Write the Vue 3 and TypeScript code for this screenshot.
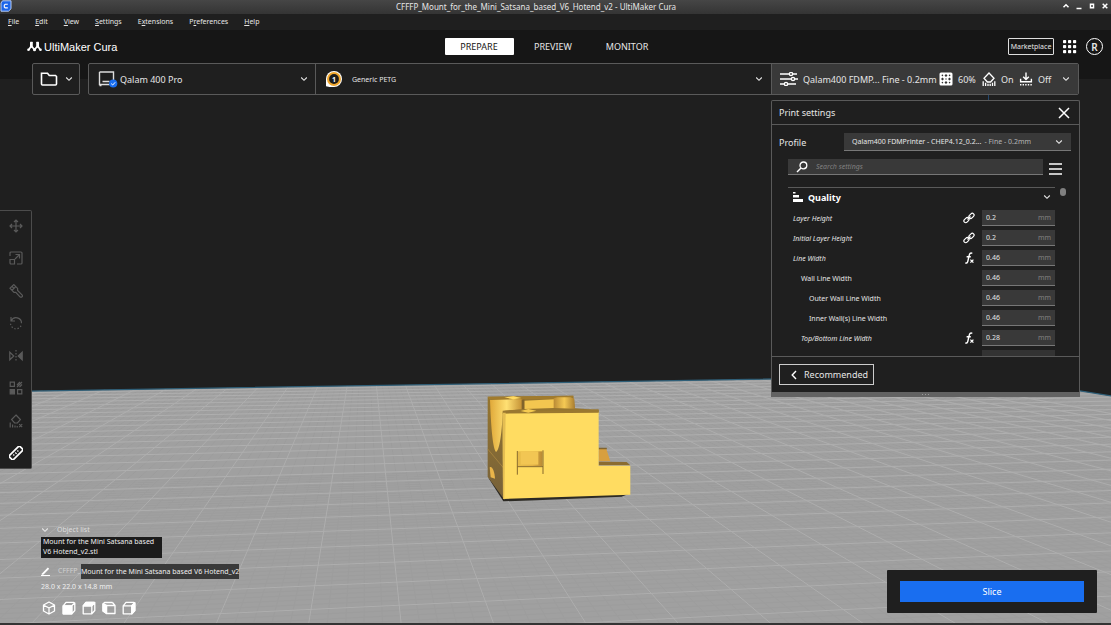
<script setup lang="ts">
import { ref } from 'vue'

interface Line { x1: number; y1: number; x2: number; y2: number }
interface Setting { name: string; value: string; depth: number; italic: boolean; icon: '' | 'link' | 'fx' }

const menus = ['File', 'Edit', 'View', 'Settings', 'Extensions', 'Preferences', 'Help']
const stages = ['PREPARE', 'PREVIEW', 'MONITOR']
const stage = ref('PREPARE')
const search = ref('')

const settings = ref<Setting[]>([
  { name: 'Layer Height', value: '0.2', depth: 0, italic: true, icon: 'link' },
  { name: 'Initial Layer Height', value: '0.2', depth: 0, italic: true, icon: 'link' },
  { name: 'Line Width', value: '0.46', depth: 0, italic: true, icon: 'fx' },
  { name: 'Wall Line Width', value: '0.46', depth: 1, italic: false, icon: '' },
  { name: 'Outer Wall Line Width', value: '0.46', depth: 2, italic: false, icon: '' },
  { name: 'Inner Wall(s) Line Width', value: '0.46', depth: 2, italic: false, icon: '' },
  { name: 'Top/Bottom Line Width', value: '0.28', depth: 1, italic: true, icon: 'fx' },
])

const tools = ['Move', 'Scale', 'Paint', 'Rotate', 'Mirror', 'Per model settings', 'Support blocker', 'Measure']
const views = ['3D view', 'Front view', 'Top view', 'Left view', 'Right view']

// Build plate in perspective: both line families share one horizon.
const horizon = 276
const vanishX = 365
const sideX = 7400

function receding(k: number): Line {
  const slope = 0.104 + 0.266 * (k - 2)
  const near = 360
  const depth = 105 * (sideX - vanishX) / (sideX - 640 + 105 * slope)
  return { x1: vanishX + slope * depth, y1: horizon + depth, x2: vanishX + slope * near, y2: horizon + near }
}

function crossing(j: number): Line {
  const d = 1 / (0.003861 + 0.0002385 * j)
  const at = (x: number) => horizon + d * (sideX - x) / (sideX - 640)
  return { x1: -10, y1: at(-10), x2: 1130, y2: at(1130) }
}

const major: Line[] = []
const minor: Line[] = []
for (let k = -14; k <= 22; k++) major.push(receding(k))
for (let j = -5; j <= 23; j++) major.push(crossing(j))
for (let k = -140; k < 230; k += 2) minor.push(receding(k / 10))
for (let j = -50; j < 60; j += 2) minor.push(crossing(j / 10))
</script>

<template>
  <div class="app">
    <svg class="scene" viewBox="0 0 1111 625" preserveAspectRatio="xMidYMin slice" aria-hidden="true">
      <defs>
        <clipPath id="plate"><path d="M-10 391.7 985 375.6 1130 399V640H-10z" /></clipPath>
        <linearGradient id="bore" x1="0" x2="1"><stop offset="0" stop-color="#e0a93a" /><stop offset=".5" stop-color="#ffe073" /><stop offset="1" stop-color="#c08b30" /></linearGradient>
        <linearGradient id="shade" x1="0" x2="1"><stop offset="0" stop-color="#e8bd4a" /><stop offset=".6" stop-color="#e2b246" /><stop offset="1" stop-color="#b98a35" /></linearGradient>
        <linearGradient id="post" x1="0" x2="1"><stop offset="0" stop-color="#b98a35" /><stop offset=".5" stop-color="#f5c954" /><stop offset="1" stop-color="#a87c30" /></linearGradient>
        <linearGradient id="side" x1="0" y1="0" x2="0" y2="1"><stop offset="0" stop-color="#96762f" /><stop offset="1" stop-color="#75603a" /></linearGradient>
      </defs>
      <g clip-path="url(#plate)">
        <rect x="-10" y="370" width="1140" height="270" fill="#a0a0a0" />
        <g stroke="#8d8d8d" stroke-width="1" opacity=".15">
          <line v-for="(l, i) in minor" :key="i" v-bind="l" />
        </g>
        <g stroke="#b3b3b3" stroke-width="1" opacity=".8">
          <line v-for="(l, i) in major" :key="i" v-bind="l" />
        </g>
      </g>
      <path d="M-10 391.7 985 375.6 1130 399" fill="none" stroke="#2f5f78" stroke-width="1.2" />
      <path d="M988.5 94v8" stroke="#23466b" />
      <g transform="translate(470 380) scale(.3333)">
        <path d="M53 290 100 364 200 361 455 350 481 340 90 330z" fill="#2c2a24" />
        <path d="M53 50 104 95V360L53 290z" fill="url(#side)" />
        <path d="M53 50 310 47 314 85 386 90V98L104 100z" fill="#96752f" />
        <path d="M60 60 160 56V88L104 92 98 98C96 150 90 210 78 216 66 200 62 110 60 60z" fill="url(#bore)" />
        <path d="M103 52 130 49 155 54 130 59z" fill="#ffda62" />
        <path d="M163 62 252 58V84L163 87z" fill="#f3c650" />
        <path d="M155 58H163V88H155z" fill="#80632b" />
        <path d="M53 50 310 47V52L255 57 60 58z" fill="#a17b2d" />
        <path d="M103 52 130 49 155 54 130 58z" fill="#ffda62" />
        <path d="M251 55 262 52H302L313 56 315 86 251 84z" fill="url(#post)" />
        <path d="M59 262C66 256 74 274 75 296L62 292z" fill="#e9b54a" />
        <path d="M53 207 104 268" stroke="#b28d43" stroke-width="2" />
        <path d="M386 203 409 207 421 244H386z" fill="#d79f40" />
        <path d="M386 203 410 203 411 208H386z" fill="#80642f" />
        <path d="M386 245 470 246 481 256H386z" fill="#8b6c30" />
        <path d="M98 98 386 96V257H481V344L99 357z" fill="#ffdc61" />
        <path d="M98 92 165 88 200 94 386 88V98L98 101z" fill="#9a7830" />
        <path d="M152 93 175 87 199 92 175 98z" fill="#f6cb50" />
        <path d="M98 98H107L103 357H99z" fill="#e4bd52" />
        <path d="M144 214H217V258H144z" fill="url(#shade)" />
        <path d="M152 214H205V254H152z" fill="#f2c653" />
        <path d="M142 213V284M219 211V282M142 260H219" fill="none" stroke="#87682c" stroke-width="3" />
      </g>
    </svg>

    <header class="titlebar">
      <svg class="appicon" viewBox="0 0 12 12"><path d="M2.5.8H11v8L8.5 11.2H1V3z" fill="#1d65e8" stroke="#b7cdf5" stroke-width="1" /><path d="M7.8 4.3H5.2L4.3 5.2V7l.9.9h2.6" fill="none" stroke="#fff" stroke-width="1.1" /></svg>
      <span class="title">CFFFP_Mount_for_the_Mini_Satsana_based_V6_Hotend_v2 - UltiMaker Cura</span>
      <div class="winbuttons">
        <button aria-label="Keep above"><svg viewBox="0 0 8 8"><path d="m1.5 5.3 2.5-2.5 2.5 2.5" /></svg></button>
        <button aria-label="Minimize"><svg viewBox="0 0 8 8"><path d="M1.5 6.5h5" /></svg></button>
        <button aria-label="Maximize"><svg viewBox="0 0 8 8"><path d="M2.5 2.3h3v3.4h-3z" /></svg></button>
        <button aria-label="Close"><svg viewBox="0 0 8 8"><path d="m1.7 1.7 4.6 4.6m0-4.6L1.7 6.3" /></svg></button>
      </div>
    </header>

    <nav class="menubar">
      <button v-for="m in menus" :key="m"><template v-if="m === 'Extensions'">E<u>x</u>tensions</template><template v-else-if="m === 'Preferences'">P<u>r</u>eferences</template><template v-else><u>{{ m[0] }}</u>{{ m.slice(1) }}</template></button>
    </nav>

    <div class="mainheader">
      <div class="brand">
        <svg viewBox="0 0 15 11"><g fill="#fff"><circle cx="1.5" cy="8.8" r="1.3" /><circle cx="13.5" cy="8.8" r="1.3" /><rect x="3" y=".8" width="2.8" height="6" rx=".5" /><rect x="9.2" y=".8" width="2.8" height="6" rx=".5" /><circle cx="7.5" cy="8.8" r="1.5" /></g><path d="M3.9 5.5 1.8 8.8M5 5.5l2.3 3.3h.4L10 5.5m1.1 0 2.1 3.3" fill="none" stroke="#fff" stroke-width="1.6" /></svg>
        <span>UltiMaker Cura</span>
      </div>
      <div class="stages">
        <button v-for="s in stages" :key="s" :class="{ active: s === stage }" @click="stage = s">{{ s }}</button>
      </div>
      <div class="account">
        <button class="market">Marketplace</button>
        <button class="apps" aria-label="Applications"><svg viewBox="0 0 14 14" fill="#fff"><template v-for="r in 3" :key="r"><rect v-for="c in 3" :key="c" :x="c * 5 - 5" :y="r * 5 - 5" width="3.2" height="3.2" rx=".8" /></template></svg></button>
        <button class="avatar" aria-label="Account">R</button>
      </div>
    </div>

    <div class="configbar">
      <button class="box open" aria-label="Open file">
        <svg class="folder" viewBox="0 0 18 16"><path d="M1.5 13V2.2h6l1.8 2.3h6.2l1 1V13a1 1 0 0 1-1 1h-13a1 1 0 0 1-1-1z" fill="none" stroke="#fff" stroke-width="1.6" /></svg>
        <svg class="chev" viewBox="0 0 8 6"><path d="m1.2 1.5 2.8 2.8 2.8-2.8" /></svg>
      </button>
      <div class="box combo">
        <button class="printer">
          <svg class="printicon" viewBox="0 0 20 18"><path d="M1.5 2h14v10M1.5 2v12.5h10M1.5 15.5h2M4.5 11.5h7" fill="none" stroke="#ddd" stroke-width="1.4" /><circle cx="15.2" cy="13.5" r="4.1" fill="#196ef0" /><path d="m13.2 13.6 1.5 1.4 2.5-2.7" fill="none" stroke="#fff" stroke-width="1" /></svg>
          <span>Qalam 400 Pro</span>
          <svg class="chev" viewBox="0 0 8 6"><path d="m1.2 1.5 2.8 2.8 2.8-2.8" /></svg>
        </button>
        <button class="material">
          <svg class="spool" viewBox="0 0 18 18"><path d="M1 16.3V9a8 8 0 1 1 8 8H4.6L1 16.3z" fill="#fff" /><circle cx="9" cy="9" r="7" fill="#f0a62c" /><circle cx="9" cy="9" r="4.9" fill="#1b1b1b" /><text x="9" y="11.7" text-anchor="middle">1</text></svg>
          <span>Generic PETG</span>
          <svg class="chev" viewBox="0 0 8 6"><path d="m1.2 1.5 2.8 2.8 2.8-2.8" /></svg>
        </button>
        <button class="summary">
          <svg class="sliders" viewBox="0 0 18 14" fill="none" stroke="#fff" stroke-width="1.4"><path d="M0 2h9m4 0h4M0 7h11m4 0h3M0 12h4m4 0h8" /><circle cx="11" cy="2" r="1.6" /><circle cx="13" cy="7" r="1.6" /><circle cx="6" cy="12" r="1.6" /></svg>
          <span class="profiletext">Qalam400 FDMP... Fine - 0.2mm</span>
          <svg class="ic" viewBox="0 0 14 14"><rect x=".5" y=".5" width="13" height="13" rx="1.5" fill="#fff" /><g fill="#333"><path d="M7 2 8.5 3.5 7 5 5.5 3.5zM7 9l1.5 1.5L7 12l-1.5-1.5zM3.5 5.5 5 7 3.5 8.5 2 7zM10.5 5.5 12 7l-1.5 1.5L9 7z" /><circle cx="3.4" cy="3.4" r=".8" /><circle cx="10.6" cy="3.4" r=".8" /><circle cx="3.4" cy="10.6" r=".8" /><circle cx="10.6" cy="10.6" r=".8" /><circle cx="7" cy="7" r=".7" /></g></svg>
          <span class="v60">60%</span>
          <svg class="ic" viewBox="0 0 14 14" fill="none" stroke="#fff" stroke-width="1.3"><path d="M7 1 12 6.2 8.6 10H5.4L2 6.2zM1.2 14V9.2M3.6 14v-3.2M6 14v-2.2M8.2 14v-2.2M10.5 14v-3.2M12.8 14V9.2" /></svg>
          <span class="von">On</span>
          <svg class="ic" viewBox="0 0 14 14" fill="none" stroke="#fff" stroke-width="1.4"><path d="M7 .5v6.8M4.2 4.8 7 7.6l2.8-2.8M1.6 6.8v3h10.8v-3" /><path d="M1 12.8h12" stroke-dasharray="1.4 1.2" /></svg>
          <span class="voff">Off</span>
          <svg class="chev" viewBox="0 0 8 6"><path d="m1.2 1.5 2.8 2.8 2.8-2.8" /></svg>
        </button>
      </div>
    </div>

    <main class="workspace">
      <div class="toolbar">
        <button v-for="(t, i) in tools" :key="t" :aria-label="t" :class="{ enabled: i === 7 }">
          <svg viewBox="0 0 14 14" fill="none" stroke="currentColor" stroke-width="1.2">
            <path v-if="i === 0" d="M7 1.2v11.6M1.2 7h11.6M5 3l2-2 2 2M5 11l2 2 2-2M3 5 1 7l2 2M11 5l2 2-2 2" />
            <path v-else-if="i === 1" d="M1 5V2a1 1 0 0 1 1-1h10a1 1 0 0 1 1 1v10a1 1 0 0 1-1 1H8M1 8.5h4.5V13H2a1 1 0 0 1-1-1zM6 8l4.2-4.2M6.5 3.5h4v4" />
            <path v-else-if="i === 2" d="M1 4.2 4.8.6 8.6 4.4v2L13 10.8a1.4 1.4 0 0 1-2 2L6.8 8.4H5zM3 6.2 6.8 2.6M3 2.4l1.6 1.6" />
            <template v-else-if="i === 3"><path d="M2 1v4h4M2.2 4.8a5.4 5.4 0 0 1 10.3 2.4" /><path d="M12 9.8a5.5 5.5 0 0 1-10.4-2" stroke-dasharray="1.4 1.8" /></template>
            <template v-else-if="i === 4"><path d="M.8 3.2 4.8 7l-4 3.8z" /><path d="M13.2 3.2 9.2 7l4 3.8z" fill="currentColor" /><path d="M7 1v12" stroke-dasharray="1.6 1.4" /></template>
            <template v-else-if="i === 5"><path d="M1.2 1.2h4.2v4.2H1.2zM8.6 8.6h4.2v4.2H8.6zM8 4l3-3M8 6l5-5M10.5 6 13 3.5" /><path d="M1.2 8.6h4.2v4.2H1.2z" fill="currentColor" /></template>
            <path v-else-if="i === 6" d="M7 1 11.4 5.6 8.4 9H5.6L2.6 5.6zM1.2 13.5V8.6M3.6 13.5v-3M6 13.5v-2M8.2 13.5v-1.6M10.2 10.2l3 3m0-3-3 3" />
            <template v-else><rect x="-.5" y="4.1" width="15" height="5.8" rx="1.6" transform="rotate(-45 7 7)" stroke-width="1.7" /><path d="m4.3 8.5 1 1M6.3 6.5 7.6 7.8M8.4 4.5l1 1" /></template>
          </svg>
        </button>
      </div>

      <section class="panel" aria-label="Print settings">
        <div class="phead">
          <span>Print settings</span>
          <button aria-label="Close panel"><svg viewBox="0 0 12 12"><path d="m1 1 10 10M11 1 1 11" fill="none" stroke="#fff" stroke-width="1.5" /></svg></button>
        </div>
        <div class="prow">
          <span>Profile</span>
          <button class="profile" aria-label="Profile"><span>Qalam400 FDMPrinter - CHEP4.12_0.2...</span><em>- Fine - 0.2mm</em><svg class="chev" viewBox="0 0 8 6"><path d="m1.2 1.5 2.8 2.8 2.8-2.8" /></svg></button>
        </div>
        <div class="srow">
          <label class="search">
            <svg viewBox="0 0 12 12"><circle cx="7.4" cy="4.4" r="3.4" fill="none" stroke="#fff" stroke-width="1.3" /><path d="M5 7 1 11" stroke="#fff" stroke-width="1.5" /></svg>
            <input v-model="search" type="text" placeholder="Search settings" aria-label="Search settings" />
          </label>
          <button class="burger" aria-label="Visibility"><svg viewBox="0 0 13 12"><path d="M0 1h13M0 6h13M0 11h13" stroke="#fff" stroke-width="1.4" /></svg></button>
        </div>
        <div class="list">
          <div class="rows">
            <button class="cat">
              <svg viewBox="0 0 10 10" fill="#fff"><path d="M0 0h2.5v1.5H0zM0 3h6v2.4H0zM0 7h10v3H0z" /></svg>
              <span>Quality</span>
              <svg class="chev" viewBox="0 0 8 6"><path d="m1.2 1.5 2.8 2.8 2.8-2.8" /></svg>
            </button>
            <div v-for="(s, i) in settings" :key="s.name" class="setting">
              <label :for="'s' + i" :class="['d' + s.depth, { italic: s.italic }]">{{ s.name }}</label>
              <svg v-if="s.icon === 'link'" class="sicon" viewBox="0 0 12 12" fill="none" stroke="#fff" stroke-width="1.2"><rect x="5.6" y="2.1" width="5.8" height="3.6" rx="1.8" transform="rotate(-45 8.5 3.9)" /><rect x=".6" y="6.3" width="5.8" height="3.6" rx="1.8" transform="rotate(-45 3.5 8.1)" /><path d="m4.5 7.5 3-3" /></svg>
              <svg v-else-if="s.icon === 'fx'" class="sicon" viewBox="0 0 12 12" fill="none" stroke="#fff"><path d="M9.3 1.3C7.4.5 6.6 1.6 6.2 3.4L4.9 9c-.4 1.8-1.2 2.4-2.6 1.9M3.6 4.7h4.2" stroke-width="1.4" /><path d="m7.4 7.6 3 3m0-3-3 3" stroke-width="1.3" /></svg>
              <span class="field"><input :id="'s' + i" v-model="s.value" type="text" /><i>mm</i></span>
            </div>
            <div class="setting"><span class="field rest"></span></div>
          </div>
          <div class="scroll"></div>
        </div>
        <div class="pfoot">
          <button><svg viewBox="0 0 6 10"><path d="M5 1 1.2 5 5 9" fill="none" stroke="#fff" stroke-width="1.4" /></svg>Recommended</button>
        </div>
        <div class="grip"><b></b><b></b><b></b></div>
      </section>

      <section class="objects" aria-label="Object list">
        <button class="otitle"><svg class="chev" viewBox="0 0 8 6"><path d="m1.2 1.5 2.8 2.8 2.8-2.8" /></svg><span>Object list</span></button>
        <div class="tip">Mount for the Mini Satsana based V6 Hotend_v2.stl</div>
        <div class="job">
          <svg viewBox="0 0 10 10"><path d="M1.2 7.2 6.8 1.4l1.4 1.4-5.6 5.6-2 .6z" fill="#fff" /><path d="M0 9.5h9" stroke="#fff" stroke-width="1" /></svg>
          <span class="pre">CFFFP_</span><span class="name">Mount for the Mini Satsana based V6 Hotend_v2</span>
        </div>
        <div class="dims">28.0 x 22.0 x 14.8 mm</div>
        <div class="views">
          <button v-for="(v, i) in views" :key="v" :aria-label="v">
            <svg viewBox="0 0 14 14" fill="none" stroke="#fff" stroke-width="1.3" stroke-linejoin="round">
              <path v-if="i === 0" d="M7 1 12.5 4v6L7 13 1.5 10V4zM1.5 4 7 7l5.5-3M7 7v6" />
              <template v-else-if="i === 3"><path d="M10.5 1.5H2.5L1 3v7l3.5 2.5H13v-8H4.5v8M1.2 2.5l3.3 2M4.5 4.5H13L10.5 1.5" /><path d="M1 3 4.5 4.5v8L1 10z" fill="#fff" /></template>
              <template v-else><path d="M1.2 4.8 4 1.3h7.5l1.3.8v7.4l-3 3.3H1.2zM1.2 4.8h8.6v8M9.8 4.8l3-3.2" /><path v-if="i === 1" d="M1.2 4.8h8.6v8H1.2z" fill="#fff" /><path v-if="i === 2" d="M1.2 4.8 4 1.3h8.8l-3 3.5z" fill="#fff" /><path v-if="i === 4" d="m9.8 4.8 3-3.2v7.9l-3 3.3z" fill="#fff" /></template>
            </svg>
          </button>
        </div>
      </section>

      <div class="action"><button>Slice</button></div>
    </main>
  </div>
</template>

<style>
html, body { margin: 0; background: #1f1f1f; }
</style>

<style scoped>
.app { position: relative; display: flex; flex-direction: column; min-height: 100vh; box-sizing: border-box; overflow: hidden; background: #1f1f1f; color: #e6e6e6; font-family: "Noto Sans", "Open Sans", sans-serif; font-size: 7px; border-bottom: 2px solid #343434; }
.app * { box-sizing: border-box; }
button { margin: 0; padding: 0; border: 0; background: none; color: inherit; font: inherit; text-align: left; cursor: pointer; }
button, span, label { white-space: nowrap; }
svg { display: block; flex: none; }
.scene { position: absolute; inset: 0; width: 100%; height: 100%; }
.titlebar, .menubar, .mainheader, .configbar { position: relative; display: flex; align-items: center; }
.titlebar { height: 14px; justify-content: center; background: linear-gradient(#464646, #343434); font-size: 8px; line-height: 12px; }
.appicon { position: absolute; left: 0; top: 0; width: 12px; height: 12px; }
.title { padding-right: 39px; }
.winbuttons { position: absolute; right: 2px; top: 2px; display: flex; gap: 5px; }
.winbuttons svg { width: 8px; height: 8px; fill: none; stroke: #fff; stroke-width: 1.5; }
.menubar { height: 16px; gap: 16px; padding-left: 8px; background: #1f1f1f; line-height: 10px; }
.menubar u { text-underline-offset: 1px; }
.mainheader { height: 49px; padding: 0 8px 16px 27px; background: #161616; justify-content: space-between; }
.brand { display: flex; align-items: center; gap: 2px; flex: 1; font-family: "Liberation Sans", sans-serif; font-size: 11px; color: #fff; }
.brand svg { width: 15px; height: 11px; }
.stages { display: flex; gap: 5px; font-size: 9px; padding-right: 24px; }
.stages button { width: 69px; height: 17px; text-align: center; line-height: 16px; border-radius: 1px; }
.stages .active { background: #fff; color: #161616; }
.account { display: flex; flex: 1; justify-content: flex-end; align-items: center; gap: 9px; }
.market { width: 46px; height: 17px; border: 1px solid #ddd; border-radius: 1px; text-align: center; line-height: 14px; }
.apps svg { width: 14px; height: 14px; }
.avatar { width: 17px; height: 17px; border: 1px solid #fff; border-radius: 50%; text-align: center; font-size: 10px; font-weight: 600; line-height: 14px; }
.configbar { margin: -16px 32px 0; height: 32px; gap: 8px; }
.box { height: 32px; border: 1px solid #5a5a5a; border-radius: 2px; background: #1f1f1f; display: flex; align-items: center; }
.chev { width: 8px; height: 6px; fill: none; stroke: #e6e6e6; stroke-width: 1.1; }
.open { width: 48px; padding: 0 6px 0 7px; justify-content: space-between; }
.folder { width: 18px; height: 16px; }
.combo { flex: 1; overflow: hidden; }
.combo button { display: flex; align-items: center; height: 30px; }
.combo .chev { margin-left: auto; }
.printer { width: 226px; padding: 0 7px 0 9px; font-size: 9px; }
.printicon { width: 20px; height: 18px; margin-right: 2px; }
.material { flex: 1; padding: 0 8px 0 9px; border-left: 1px solid #5a5a5a !important; }
.spool { width: 18px; height: 18px; margin-right: 9px; }
.spool text { font-size: 7px; font-weight: 700; fill: #fff; }
.summary { width: 307px; padding: 0 8px; border-left: 1px solid #5a5a5a !important; background: #393939; font-size: 9px; }
.sliders { width: 18px; height: 14px; }
.profiletext { width: 141px; padding-left: 5px; }
.ic { width: 14px; height: 14px; }
.v60 { width: 29px; padding-left: 5px; }
.von { width: 23px; padding-left: 5px; }
.voff { padding-left: 5px; }
.workspace { position: relative; flex: 1; min-height: 528px; }
.toolbar { position: absolute; left: 0; top: 115px; width: 32px; height: 259px; padding: 3px 0; display: flex; flex-direction: column; align-items: center; justify-content: space-between; background: #1f1f1f; border: solid #4c4c4c; border-width: 1px 1px 1px 0; border-radius: 0 2px 2px 0; color: #5a5a5a; }
.toolbar button { width: 24px; height: 24px; display: grid; place-items: center; }
.toolbar svg { width: 14px; height: 14px; }
.toolbar .enabled { color: #fff; }
.panel { position: absolute; right: 31px; top: 5px; width: 309px; background: #1f1f1f; border: 1px solid #5a5a5a; border-bottom: 0; border-radius: 2px 2px 0 0; }
.phead { display: flex; justify-content: space-between; align-items: center; height: 24px; padding: 0 9px 0 7px; border-bottom: 1px solid #5a5a5a; font-size: 9px; }
.phead svg { width: 12px; height: 12px; }
.prow { display: flex; align-items: center; justify-content: space-between; margin: 8px 8px 0 7px; font-size: 9px; }
.profile { display: flex; align-items: center; width: 227px; height: 18px; padding: 0 8px; background: #393939; border-bottom: 1px solid #777; font-size: 7px; }
.profile em { font-style: normal; color: #b5b5b5; margin-left: 3px; }
.profile .chev { margin-left: auto; }
.srow { display: flex; align-items: flex-end; justify-content: space-between; margin: 8px 17px 0 16px; }
.search { display: flex; align-items: center; gap: 8px; width: 255px; height: 16px; padding: 0 8px; background: #393939; border-bottom: 1px solid #777; }
.search svg { width: 12px; height: 12px; }
input { min-width: 0; padding: 0; border: 0; background: none; outline: 0; color: #e6e6e6; font: inherit; }
.search input { flex: 1; font-style: italic; }
.search input::placeholder { color: #808080; opacity: 1; }
.burger svg { width: 13px; height: 12px; }
.list { display: flex; gap: 5px; height: 169px; margin: 12px 0 0 16px; overflow: hidden; }
.rows { width: 267px; }
.cat { display: flex; align-items: center; width: 100%; height: 21px; padding: 0 4px 2px 5px; border-top: 1px solid #5a5a5a; font-size: 9px; font-weight: 700; color: #fff; }
.cat > svg:first-child { width: 10px; height: 10px; margin-right: 5px; }
.cat .chev { margin-left: auto; }
.setting { display: flex; align-items: center; height: 20px; }
.d0 { padding-left: 5px; }
.d1 { padding-left: 13px; }
.d2 { padding-left: 21px; }
.italic { font-style: italic; }
.sicon { width: 12px; height: 12px; margin-left: auto; }
.field { display: flex; align-items: center; width: 73px; height: 16px; margin-left: auto; padding: 0 4px; background: #393939; border-bottom: 1px solid #777; }
.sicon + .field { margin-left: 7px; }
.field input { flex: 1; }
.field i { font-style: normal; color: #808080; }
.rest { background: #333; }
.scroll { width: 6px; height: 8px; margin-top: 1px; border-radius: 3px; background: #808080; }
.pfoot { height: 36px; padding: 7px; border-top: 1px solid #5a5a5a; }
.pfoot button { display: flex; align-items: center; gap: 7px; width: 95px; height: 21px; padding: 0 0 0 11px; border: 1px solid #ccc; font-size: 9px; }
.pfoot svg { width: 6px; height: 10px; }
.grip { display: flex; justify-content: center; align-items: center; gap: 2px; height: 5px; margin: 0 -1px; background: #626262; }
.grip b { width: 1px; height: 1px; background: #999; }
.objects { position: absolute; left: 41px; bottom: 8px; display: flex; flex-direction: column; align-items: flex-start; line-height: 10px; color: #efefef; }
.otitle { display: flex; align-items: center; gap: 8px; height: 14px; color: #dedede; }
.tip { width: 121px; height: 21px; padding: 0 4px 0 2px; background: #1b1b1b; }
.job { display: flex; align-items: center; margin-top: 5px; height: 16px; }
.job svg { width: 10px; height: 10px; margin-right: 7px; }
.pre { width: 23px; color: #d0d0d0; }
.name { height: 15px; line-height: 15px; background: #393939; }
.dims { margin-top: 3px; height: 11px; }
.views { display: flex; gap: 6px; margin: 8px 0 0 1px; }
.views svg { width: 14px; height: 14px; }
.action { position: absolute; right: 14px; bottom: 10px; width: 210px; padding: 11px 13px; background: #1f1f1f; border-radius: 1px; }
.action button { width: 100%; height: 21px; background: #196ef0; color: #fff; text-align: center; font-size: 9px; }
</style>
